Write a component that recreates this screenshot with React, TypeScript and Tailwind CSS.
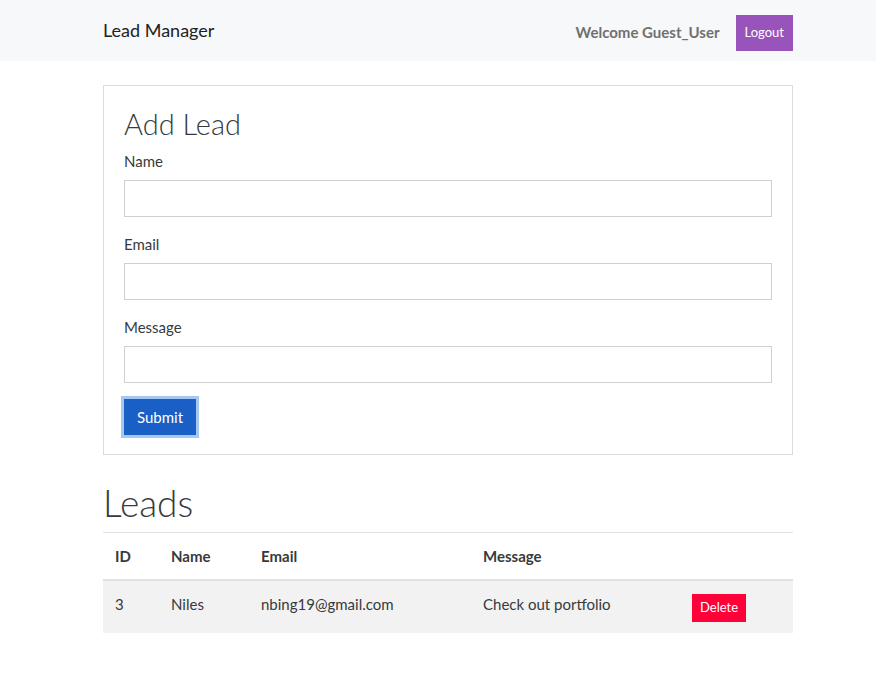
import React from "react";

const font = { fontFamily: '"Source Sans Pro", Lato, "Noto Sans", sans-serif' };

function Field({ label }: { label: string }) {
  return (
    <div className="mb-[16px]">
      <label className="block text-[15px] leading-[22px] mb-[8px]">{label}</label>
      <input className="block w-full h-[37px] border border-[#cdd1d6] bg-white px-3 outline-none" />
    </div>
  );
}

export default function App() {
  const leads = [{ id: 3, name: "Niles", email: "nbing19@gmail.com", message: "Check out portfolio" }];

  return (
    <div className="min-h-[694px] bg-white text-[#373a3c]" style={font}>
      <nav className="bg-[#f7f8fa] h-[61px]">
        <div className="w-[690px] ml-[103px] h-full flex items-center justify-between">
          <span className="text-[18px] text-[#222]">Lead Manager</span>
          <div className="flex items-center mt-[4px]">
            <span className="text-[15px] font-bold text-[#707070] mr-[16px]">Welcome Guest_User</span>
            <button className="h-[36px] px-[9px] bg-[#9954bb] text-white text-[13px]">Logout</button>
          </div>
        </div>
      </nav>

      <div className="w-[690px] ml-[103px]">
        <div className="mt-[24px] border border-[#dcdcdc] px-[20px] pt-[20px] pb-[19px]">
          <h2 className="text-[29px] font-light leading-[36px] mb-[8px]">Add Lead</h2>
          <form>
            <Field label="Name" />
            <Field label="Email" />
            <Field label="Message" />
            <button
              type="button"
              className="h-[36px] px-[13px] bg-[#1a5fc6] text-white text-[15px] ring-[3px] ring-[#a5c8f3]"
            >
              Submit
            </button>
          </form>
        </div>

        <h1 className="mt-[26px] text-[37px] font-light leading-[44px] mb-[7px]">Leads</h1>
        <table className="w-full text-[15px] border-collapse">
          <thead>
            <tr className="border-t border-[#dee2e6] border-b-2 border-b-[#dee2e6]">
              <th className="text-left font-bold w-[56px] pl-[12px] h-[47px]">ID</th>
              <th className="text-left font-bold w-[90px] pl-[12px]">Name</th>
              <th className="text-left font-bold w-[222px] pl-[12px]">Email</th>
              <th className="text-left font-bold w-[209px] pl-[12px]">Message</th>
              <th className="w-[113px]"></th>
            </tr>
          </thead>
          <tbody>
            {leads.map((l) => (
              <tr key={l.id} className="bg-[#f2f2f2]">
                <td className="pl-[12px] h-[53px] pb-[4px]">{l.id}</td>
                <td className="pl-[12px] pb-[4px]">{l.name}</td>
                <td className="pl-[12px] pb-[4px]">{l.email}</td>
                <td className="pl-[12px] pb-[4px]">{l.message}</td>
                <td className="pl-[12px] pt-[2px]">
                  <button className="h-[28px] px-[8px] bg-[#ff0039] text-white text-[13px]">Delete</button>
                </td>
              </tr>
            ))}
          </tbody>
        </table>
      </div>
    </div>
  );
}
